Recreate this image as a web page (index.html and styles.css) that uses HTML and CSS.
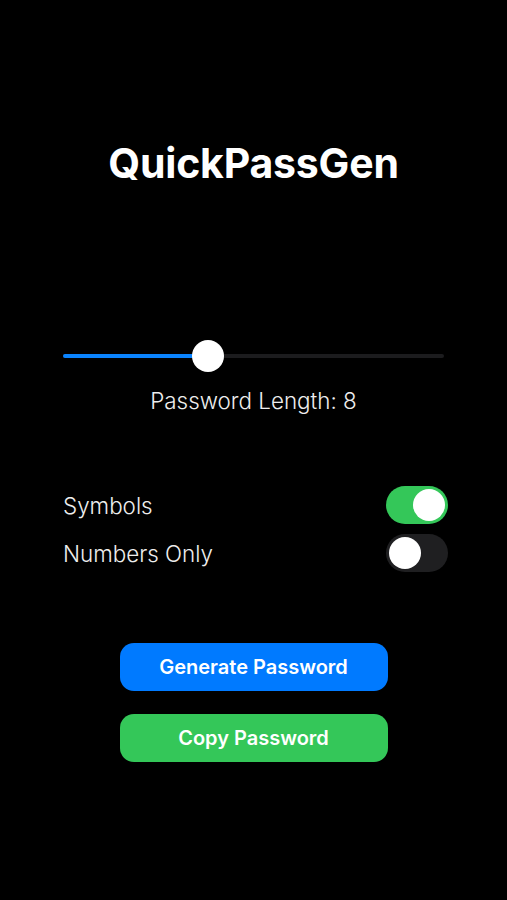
FILE: index.html
```html
<!DOCTYPE html>
<html lang="en">
<head>
<meta charset="utf-8">
<title>QuickPassGen</title>
<link rel="stylesheet" href="styles.css">
</head>
<body>
<main class="app">
  <h1 class="title">QuickPassGen</h1>
  <div class="slider">
    <div class="track">
      <div class="fill" style="width: 145px"></div>
    </div>
    <div class="thumb" style="left: 145px"></div>
  </div>
  <p class="length">Password Length: 8</p>
  <div class="options">
    <div class="option">
      <span class="option-label">Symbols</span>
      <span class="switch on"><span class="knob"></span></span>
    </div>
    <div class="option">
      <span class="option-label">Numbers Only</span>
      <span class="switch"><span class="knob"></span></span>
    </div>
  </div>
  <div class="actions">
    <button class="btn btn-blue">Generate Password</button>
    <button class="btn btn-green">Copy Password</button>
  </div>
</main>
</body>
</html>
```
FILE: styles.css
```css
* { box-sizing: border-box; }
html, body { margin: 0; padding: 0; background: #000; }
body {
  width: 507px;
  height: 900px;
  color: #fff;
  font-family: Inter, "Noto Sans", sans-serif;
  overflow: hidden;
}
.app {
  display: flex;
  flex-direction: column;
  padding: 0 63px;
}
.title {
  margin: 140px 0 0;
  font-size: 41px;
  line-height: 46px;
  font-weight: 700;
  text-align: center;
  letter-spacing: -0.2px;
}
.slider {
  position: relative;
  height: 34px;
  margin-top: 153px;
  display: flex;
  align-items: center;
}
.track {
  width: 100%;
  height: 4px;
  border-radius: 2px;
  background: #1c1c1e;
  overflow: hidden;
}
.fill {
  height: 100%;
  background: #0a84ff;
}
.thumb {
  position: absolute;
  top: 1px;
  width: 32px;
  height: 32px;
  margin-left: -16px;
  border-radius: 50%;
  background: #fff;
}
.length {
  margin: 15px 0 0;
  text-align: center;
  font-size: 22.4px;
  line-height: 26px;
  font-weight: 300;
  color: #eee;
}
.options {
  margin-top: 72px;
  margin-right: -4px;
  display: flex;
  flex-direction: column;
  gap: 10px;
}
.option {
  display: flex;
  align-items: center;
  justify-content: space-between;
  height: 38px;
}
.option-label {
  font-size: 22.4px;
  font-weight: 300;
  color: #eee;
}
.switch {
  width: 62px;
  height: 38px;
  border-radius: 19px;
  background: #1f1f21;
  padding: 3px;
  display: flex;
}
.switch.on {
  background: #34c759;
  justify-content: flex-end;
}
.knob {
  width: 32px;
  height: 32px;
  border-radius: 50%;
  background: #fff;
}
.actions {
  margin-top: 71px;
  display: flex;
  flex-direction: column;
  align-items: center;
  gap: 23px;
}
.btn {
  width: 268px;
  height: 48px;
  border: 0;
  border-radius: 14px;
  color: #fff;
  font-family: inherit;
  font-size: 20px;
  font-weight: 600;
  padding: 0;
}
.btn-blue { background: #007aff; }
.btn-green { background: #34c759; }
```
